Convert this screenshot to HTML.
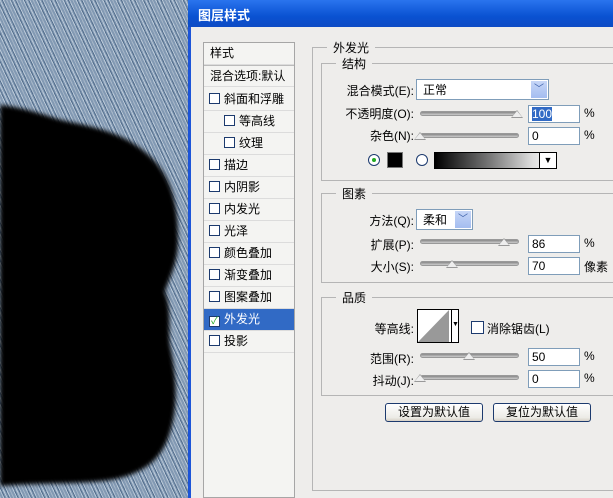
<!DOCTYPE html>
<html><head><meta charset="utf-8"><style>
*{margin:0;padding:0;box-sizing:border-box}
body{width:613px;height:498px;overflow:hidden;position:relative;font-family:"Liberation Sans","Noto Sans CJK SC",sans-serif;font-size:12px;color:#000;background:#fff}
.a{position:absolute}
#denim{left:0;top:0;width:190px;height:498px;background:
repeating-linear-gradient(65deg,rgba(230,238,245,.55) 0 1px,transparent 1px 3px),
repeating-linear-gradient(65deg,rgba(40,70,105,.5) 0 1px,transparent 1px 4px),
#8299b3;}
#dlg{left:188px;top:0;width:425px;height:498px;background:#eeedeb;border-left:3px solid #1c54d8}
#title{left:188px;top:0;width:425px;height:27px;background:linear-gradient(#2a74ee,#0a52d2 60%,#0d4bc4);color:#fff;font-weight:bold;font-size:13px;padding:5px 0 0 10px}
.list{left:203px;top:42px;width:92px;height:456px;background:#f4f4f2;border:1px solid #a6a6a6}
.it{position:absolute;left:0;width:90px;height:22px;border-bottom:1px solid #dcdcdc;line-height:21px}
.cb{display:inline-block;width:11px;height:11px;border:1px solid #1c3a6e;background:#fff;vertical-align:-1px;margin-right:4px}
.g{position:absolute;border:1px solid #b5b5b5;border-right:none}
.gl{position:absolute;background:#eeedeb;padding:0 6px;font-size:12px}
.lbl{position:absolute;text-align:right;width:120px}
.in{position:absolute;width:52px;height:18px;background:#fff;border:1px solid #7f9db9;padding-left:3px;line-height:16px}
.sl{position:absolute;width:99px;height:5px;border-radius:3px;background:linear-gradient(#888,#ccc);border:1px solid #999}
.th{position:absolute;top:2px;width:0;height:0;border-left:6px solid transparent;border-right:6px solid transparent;border-bottom:8px solid #999}
.th:after{content:"";position:absolute;left:-5px;top:1px;border-left:5px solid transparent;border-right:5px solid transparent;border-bottom:6px solid #eee}
.sel{position:absolute;height:21px;background:#fff;border:1px solid #7f9db9;padding:1px 0 0 6px}
.arr{position:absolute;right:1px;top:1px;width:16px;height:17px;background:linear-gradient(#c6d6f7,#a4bdf0);color:#3b5fa8;font-size:10px;text-align:center;line-height:17px}
.btn{position:absolute;height:19px;border:1px solid #1c3a6e;border-radius:3px;background:linear-gradient(#fff,#ecebe6 80%,#d6d0c5);text-align:center;line-height:17px}
</style></head><body>
<div id="denim" class="a"></div>
<svg class="a" style="left:0;top:0" width="190" height="498"><defs><filter id="b"><feGaussianBlur stdDeviation="2"/></filter></defs>
<path filter="url(#b)" d="M0,105 C30,108 50,118 70,122 C100,128 125,135 145,152 C170,172 178,200 178,240 C178,265 168,280 165,292 C172,310 168,330 170,345 C176,375 178,400 172,425 C165,455 150,470 120,478 C90,485 50,482 0,486 Z" fill="#000"/></svg>
<div id="dlg" class="a"></div>
<div id="title" class="a">图层样式</div>
<div class="a list">
<div class="it" style="top:0;padding-left:6px">样式</div>
<div class="it" style="top:22px;padding-left:6px;border-top:1px solid #bbb">混合选项:默认</div>
<div class="it" style="top:46px;padding-left:5px"><span class="cb"></span>斜面和浮雕</div>
<div class="it" style="top:68px;padding-left:20px"><span class="cb"></span>等高线</div>
<div class="it" style="top:90px;padding-left:20px"><span class="cb"></span>纹理</div>
<div class="it" style="top:112px;padding-left:5px"><span class="cb"></span>描边</div>
<div class="it" style="top:134px;padding-left:5px"><span class="cb"></span>内阴影</div>
<div class="it" style="top:156px;padding-left:5px"><span class="cb"></span>内发光</div>
<div class="it" style="top:178px;padding-left:5px"><span class="cb"></span>光泽</div>
<div class="it" style="top:200px;padding-left:5px"><span class="cb"></span>颜色叠加</div>
<div class="it" style="top:222px;padding-left:5px"><span class="cb"></span>渐变叠加</div>
<div class="it" style="top:244px;padding-left:5px"><span class="cb"></span>图案叠加</div>
<div class="it" style="top:266px;padding-left:5px;background:#316ac5;color:#fff"><span class="cb" style="color:#2a2;font-size:10px;line-height:9px;text-align:center">✓</span>外发光</div>
<div class="it" style="top:288px;padding-left:5px"><span class="cb"></span>投影</div>
</div>
<div class="g" style="left:312px;top:47px;width:310px;height:444px"></div>
<div class="gl" style="left:327px;top:39px">外发光</div>
<div class="g" style="left:321px;top:63px;width:300px;height:118px"></div>
<div class="gl" style="left:336px;top:55px">结构</div>
<div class="g" style="left:321px;top:193px;width:300px;height:90px"></div>
<div class="gl" style="left:336px;top:185px">图素</div>
<div class="g" style="left:321px;top:297px;width:300px;height:99px"></div>
<div class="gl" style="left:336px;top:289px">品质</div>

<div class="lbl" style="left:294px;top:82px">混合模式(E):</div>
<div class="sel" style="left:416px;top:79px;width:133px">正常<div class="arr">﹀</div></div>
<div class="lbl" style="left:294px;top:105px">不透明度(O):</div>
<div class="sl" style="left:420px;top:111px"></div><div class="th" style="left:511px;top:110px"></div>
<div class="in" style="left:528px;top:105px"><span style="background:#316ac5;color:#fff">100</span></div><div class="a" style="left:584px;top:106px">%</div>
<div class="lbl" style="left:294px;top:127px">杂色(N):</div>
<div class="sl" style="left:420px;top:133px"></div><div class="th" style="left:414px;top:132px"></div>
<div class="in" style="left:528px;top:127px">0</div><div class="a" style="left:584px;top:128px">%</div>
<div class="a" style="left:368px;top:154px;width:12px;height:12px;border-radius:50%;border:1px solid #1c3a6e;background:#fff"><div class="a" style="left:3px;top:3px;width:4px;height:4px;border-radius:50%;background:#2a2"></div></div>
<div class="a" style="left:387px;top:152px;width:16px;height:16px;background:#000;border:1px solid #777"></div>
<div class="a" style="left:416px;top:154px;width:12px;height:12px;border-radius:50%;border:1px solid #1c3a6e;background:#fff"></div>
<div class="a" style="left:434px;top:152px;width:123px;height:17px;border:1px solid #000;background:linear-gradient(90deg,#000,#777 45%,#ddd 80%,#fff)"><div class="a" style="right:0;top:0;width:17px;height:15px;background:#fff;border-left:1px solid #000;font-size:9px;text-align:center;line-height:15px">▼</div></div>

<div class="lbl" style="left:294px;top:212px">方法(Q):</div>
<div class="sel" style="left:416px;top:209px;width:57px">柔和<div class="arr">﹀</div></div>
<div class="lbl" style="left:294px;top:236px">扩展(P):</div>
<div class="sl" style="left:420px;top:239px"></div><div class="th" style="left:498px;top:238px"></div>
<div class="in" style="left:528px;top:235px">86</div><div class="a" style="left:584px;top:236px">%</div>
<div class="lbl" style="left:294px;top:258px">大小(S):</div>
<div class="sl" style="left:420px;top:261px"></div><div class="th" style="left:446px;top:260px"></div>
<div class="in" style="left:528px;top:257px">70</div><div class="a" style="left:584px;top:258px">像素</div>

<div class="lbl" style="left:294px;top:320px">等高线:</div>
<div class="a" style="left:417px;top:309px;width:42px;height:34px;border:1px solid #000;background:#fff"><svg width="33" height="32" style="position:absolute;left:0;top:0"><path d="M0,32 L31,0 L31,32 Z" fill="#999"/></svg><div class="a" style="left:33px;top:0;width:7px;height:32px;border-left:1px solid #000;font-size:7px;text-align:center;line-height:30px">▼</div></div>
<div class="a" style="left:471px;top:321px;width:13px;height:13px;border:1px solid #1c3a6e;background:#fff"></div>
<div class="a" style="left:487px;top:320px">消除锯齿(L)</div>
<div class="lbl" style="left:294px;top:350px">范围(R):</div>
<div class="sl" style="left:420px;top:353px"></div><div class="th" style="left:463px;top:352px"></div>
<div class="in" style="left:528px;top:348px">50</div><div class="a" style="left:584px;top:349px">%</div>
<div class="lbl" style="left:294px;top:372px">抖动(J):</div>
<div class="sl" style="left:420px;top:375px"></div><div class="th" style="left:414px;top:374px"></div>
<div class="in" style="left:528px;top:370px">0</div><div class="a" style="left:584px;top:371px">%</div>

<div class="btn" style="left:385px;top:403px;width:98px">设置为默认值</div>
<div class="btn" style="left:493px;top:403px;width:98px">复位为默认值</div>
</body></html>
